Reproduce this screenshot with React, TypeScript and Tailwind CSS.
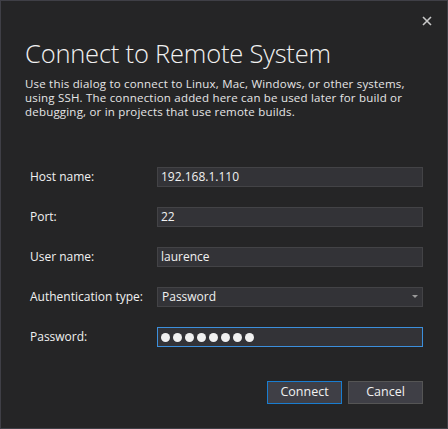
import { useState } from "react";

const fields = [
  { label: "Host name:", value: "192.168.1.110" },
  { label: "Port:", value: "22" },
  { label: "User name:", value: "laurence" },
];

export default function App() {
  const [auth] = useState("Password");

  return (
    <div
      className="w-[448px] h-[429px] flex flex-col bg-[#252526] border border-[#3f3f46] text-[#f1f1f1]"
      style={{ fontFamily: '"Open Sans", "Noto Sans", sans-serif' }}
    >
      <div className="flex justify-end pt-[15px] pr-[15px]">
        <svg width="10" height="10" viewBox="0 0 10 10" className="text-[#c8c8c8]">
          <path d="M1 1 L9 9 M9 1 L1 9" stroke="currentColor" strokeWidth="1.6" />
        </svg>
      </div>

      <h1 className="ml-[24px] mt-[10px] text-[25.5px] leading-[34px] font-light tracking-[-0.2px]">
        Connect to Remote System
      </h1>

      <p className="ml-[24px] mt-[7px] text-[11.5px] leading-[14px] tracking-[0.2px] text-[#e6e6e6] whitespace-nowrap">
        Use this dialog to connect to Linux, Mac, Windows, or other systems,
        <br />
        using SSH. The connection added here can be used later for build or
        <br />
        debugging, or in projects that use remote builds.
      </p>

      <div className="mt-[48px] ml-[29px] grid grid-cols-[127px_266px] gap-y-[20px] text-[12px]">
        {fields.map((f) => (
          <div key={f.label} className="contents">
            <div className="flex items-center h-[20px]">{f.label}</div>
            <div className="h-[20px] flex items-center px-[3px] bg-[#333337] border border-[#434346]">
              {f.value}
            </div>
          </div>
        ))}

        <div className="flex items-center h-[20px]">Authentication type:</div>
        <div className="h-[20px] flex items-center justify-between px-[4px] bg-[#333337] border border-[#434346]">
          <span>{auth}</span>
          <svg width="6" height="4" viewBox="0 0 6 4">
            <path d="M0 0 H6 L3 3 Z" fill="#9a9a9a" />
          </svg>
        </div>

        <div className="flex items-center h-[20px]">Password:</div>
        <div className="h-[20px] flex items-center gap-[3px] px-[3px] bg-[#333337] border border-[#3c8fdc]">
          {Array.from({ length: 8 }).map((_, i) => (
            <span key={i} className="w-[9px] h-[9px] rounded-full bg-[#f1f1f1]" />
          ))}
        </div>
      </div>

      <div className="flex justify-end gap-[6px] mt-[34px] mr-[24px] text-[12.5px]">
        <button className="w-[75px] h-[23px] bg-[#3f3f46] border border-[#1a7dd0] text-[#f1f1f1]">
          Connect
        </button>
        <button className="w-[75px] h-[23px] bg-[#3f3f46] border border-[#555555] text-[#f1f1f1]">
          Cancel
        </button>
      </div>
    </div>
  );
}
